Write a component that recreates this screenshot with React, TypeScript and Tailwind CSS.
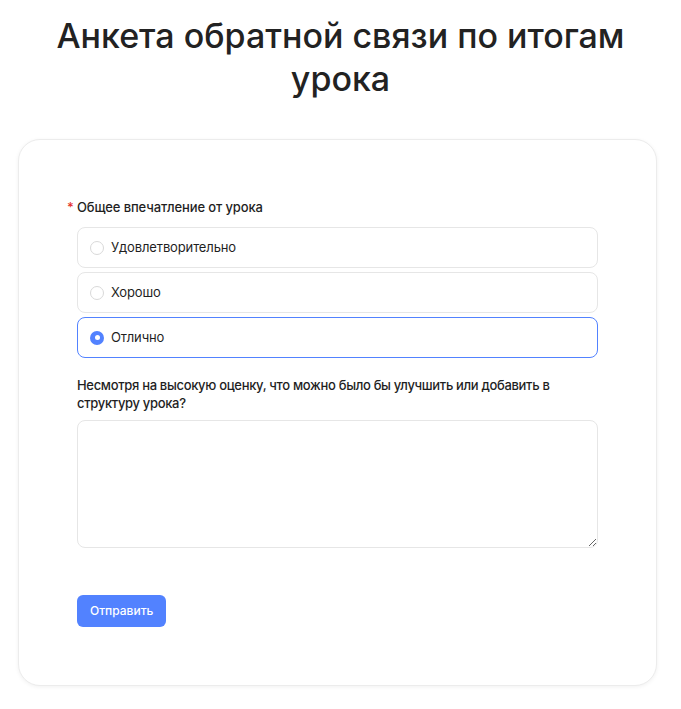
export default function App() {
  const options = ["Удовлетворительно", "Хорошо", "Отлично"];
  const selected = "Отлично";

  return (
    <div className="min-h-[709px] bg-white font-['Inter',sans-serif] text-[#1f1f1f]">
      {/* Title */}
      <h1 className="px-10 pt-[14px] text-center text-[34px] leading-[43px] font-medium text-[#222]">
        Анкета обратной связи по итогам урока
      </h1>

      {/* Card */}
      <div className="mt-[39px] ml-[18px] w-[639px] rounded-[22px] border border-[#ececec] bg-white px-[58px] pt-[58px] pb-[58px] shadow-[0_1px_4px_rgba(0,0,0,0.06)]">
        <div className="relative text-[13px] leading-[18px] font-medium tracking-[-0.01em]">
          <span className="absolute -left-[10px] top-0 text-[#e5322d]">*</span>
          Общее впечатление от урока
        </div>

        <div className="mt-[11px] flex flex-col gap-[4px]">
          {options.map((opt) => {
            const active = opt === selected;
            return (
              <label
                key={opt}
                className={`flex h-[41px] items-center gap-[7px] rounded-[8px] border px-[12px] text-[13px] tracking-[-0.01em] ${
                  active ? "border-[#5282ff]" : "border-[#e6e6e6]"
                }`}
              >
                {active ? (
                  <span className="flex h-[14px] w-[14px] items-center justify-center rounded-full bg-[#5282ff]">
                    <span className="h-[5px] w-[5px] rounded-full bg-white" />
                  </span>
                ) : (
                  <span className="h-[14px] w-[14px] rounded-full border border-[#d9d9d9]" />
                )}
                {opt}
              </label>
            );
          })}
        </div>

        <div className="mt-[18px] text-[13px] leading-[18px] font-medium tracking-[-0.025em]">
          Несмотря на высокую оценку, что можно было бы улучшить или добавить в структуру урока?
        </div>

        <textarea className="mt-[8px] block h-[128px] w-full rounded-[8px] border border-[#e6e6e6] outline-none" />

        <button className="mt-[47px] h-[32px] rounded-[6px] bg-[#5282ff] px-[13px] text-[12px] font-medium text-white">
          Отправить
        </button>
      </div>
    </div>
  );
}
